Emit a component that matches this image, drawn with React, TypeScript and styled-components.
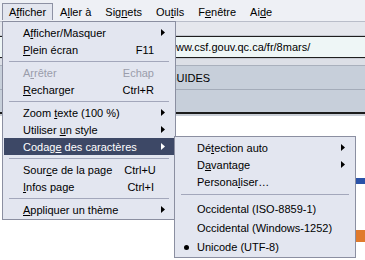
import React from 'react';
import styled, { createGlobalStyle } from 'styled-components';

const GlobalStyle = createGlobalStyle`
  html, body {
    margin: 0;
    padding: 0;
    background: #ffffff;
  }
  body {
    font-family: 'Liberation Sans', Arial, sans-serif;
    font-size: 11px;
    color: #000;
  }
`;

const Window = styled.div`
  position: relative;
  width: 365px;
  height: 260px;
  overflow: hidden;
  display: flex;
  flex-direction: column;
  background: #ffffff;
`;

const MenuBar = styled.div`
  display: flex;
  align-items: flex-start;
  height: 21px;
  padding: 0 0 0 2px;
  background: #eef0f5;
  border-bottom: 1px solid #b9bdc9;
  flex-shrink: 0;
`;

const BarItem = styled.div<{ $open?: boolean }>`
  height: 17px;
  margin-top: 3px;
  padding: 0 6px;
  line-height: 16px;
  box-sizing: border-box;
  border: 1px solid ${(p) => (p.$open ? '#8d91a3' : 'transparent')};
  border-bottom: none;
  background: ${(p) => (p.$open ? '#e3e6ef' : 'transparent')};
  white-space: nowrap;
`;

const Toolbar = styled.div`
  height: 13px;
  background: #e5e7ed;
  border-bottom: 1px solid #c3c7cf;
  flex-shrink: 0;
`;

const UrlBar = styled.div`
  height: 20px;
  line-height: 20px;
  padding-left: 168px;
  background: #eef6f6;
  border-top: 1px solid #1e1e1e;
  border-bottom: 1px solid #1e1e1e;
  white-space: nowrap;
  flex-shrink: 0;
`;

const Groove = styled.div`
  height: 6px;
  background: #dcdfe6;
  border-top: 1px solid #c7cbd3;
  border-bottom: 1px solid #a9b0bc;
  flex-shrink: 0;
`;

const TabStrip = styled.div`
  height: 23px;
  line-height: 24px;
  padding-left: 168px;
  background: #c7cfda;
  border-bottom: 1px solid #a4acb9;
  white-space: nowrap;
  flex-shrink: 0;
`;

const ToolBand = styled.div`
  height: 22px;
  background: #c7cfda;
  border-bottom: 2px solid #1c1c1c;
  flex-shrink: 0;
`;

const Content = styled.div`
  flex: 1;
  display: flex;
  justify-content: flex-end;
  border-top: 2px solid #c9ced6;
  background: #ffffff;
`;

const Banner = styled.div`
  width: 10px;
  display: flex;
  flex-direction: column;
  padding-top: 62px;
  gap: 46px;
`;

const Swatch = styled.div<{ $color: string; $h: number }>`
  height: ${(p) => p.$h}px;
  background: ${(p) => p.$color};
`;

const Menu = styled.div<{ $left: number; $top: number; $width: number }>`
  position: absolute;
  left: ${(p) => p.$left}px;
  top: ${(p) => p.$top}px;
  width: ${(p) => p.$width}px;
  box-sizing: border-box;
  padding: 2px 1px 1px;
  background: #e3e6f0;
  border: 1px solid #8b8fa1;
  display: flex;
  flex-direction: column;
`;

const Item = styled.div<{ $active?: boolean; $disabled?: boolean; $h?: number; $indent: number; $right: number }>`
  display: flex;
  align-items: center;
  height: ${(p) => p.$h ?? 17}px;
  padding: 0 ${(p) => p.$right}px 0 ${(p) => p.$indent}px;
  position: relative;
  white-space: nowrap;
  background: ${(p) => (p.$active ? '#3d4866' : 'transparent')};
  color: ${(p) => (p.$active ? '#ffffff' : p.$disabled ? '#9a9dab' : '#000000')};
`;

const Label = styled.span`
  flex: 1;
`;

const Shortcut = styled.span`
  margin: 0 11px 0 12px;
`;

const Arrow = styled.svg`
  width: 4px;
  height: 7px;
  fill: currentColor;
`;

const Bullet = styled.span`
  position: absolute;
  left: 8px;
  top: 8px;
  width: 5px;
  height: 5px;
  border-radius: 50%;
  background: #000;
`;

const Separator = styled.div<{ $h: number }>`
  height: ${(p) => p.$h}px;
  display: flex;
  align-items: center;
  padding: 0 5px;
  &::after {
    content: '';
    flex: 1;
    height: 1px;
    background: #a3a7bb;
  }
`;

const U = styled.u`
  text-decoration: underline;
  text-underline-offset: 1px;
`;

const ArrowIcon = () => (
  <Arrow viewBox="0 0 4 7">
    <path d="M0 0 L4 3.5 L0 7 Z" />
  </Arrow>
);

type Entry =
  | { sep: true }
  | { sep?: false; label: React.ReactNode; shortcut?: string; sub?: boolean; active?: boolean; disabled?: boolean; checked?: boolean; h?: number };

const mainEntries: Entry[] = [
  { label: <>A<U>f</U>ficher/Masquer</>, sub: true },
  { label: <><U>P</U>lein écran</>, shortcut: 'F11' },
  { sep: true },
  { label: <>A<U>r</U>rêter</>, shortcut: 'Echap', disabled: true },
  { label: <><U>R</U>echarger</>, shortcut: 'Ctrl+R' },
  { sep: true },
  { label: <>Zoom <U>t</U>exte (100 %)</>, sub: true },
  { label: <>Utiliser <U>u</U>n style</>, sub: true },
  { label: <>Codag<U>e</U> des caractères</>, sub: true, active: true },
  { sep: true },
  { label: <>Sour<U>c</U>e de la page</>, shortcut: 'Ctrl+U' },
  { label: <><U>I</U>nfos page</>, shortcut: 'Ctrl+I' },
  { sep: true },
  { label: <><U>A</U>ppliquer un thème</>, sub: true },
];

const charsetEntries: Entry[] = [
  { label: <>Dé<U>t</U>ection auto</>, sub: true },
  { label: <>D<U>a</U>vantage</>, sub: true },
  { label: <>Persona<U>l</U>iser…</> },
  { sep: true },
  { label: 'Occidental (ISO-8859-1)', h: 19 },
  { label: 'Occidental (Windows-1252)', h: 19 },
  { label: 'Unicode (UTF-8)', h: 19, checked: true },
];

const renderEntries = (entries: Entry[], indent: number, right: number, sepH: number) =>
  entries.map((e, i) =>
    e.sep ? (
      <Separator key={`sep-${i}`} $h={sepH} />
    ) : (
      <Item
        key={`item-${i}`}
        $active={e.active}
        $disabled={e.disabled}
        $h={e.h}
        $indent={indent}
        $right={right}
      >
        {e.checked && <Bullet />}
        <Label>{e.label}</Label>
        {e.shortcut && <Shortcut>{e.shortcut}</Shortcut>}
        {e.sub && <ArrowIcon />}
      </Item>
    ),
  );

const App: React.FC = () => (
  <>
    <GlobalStyle />
    <Window>
      <MenuBar>
        <BarItem $open>A<U>f</U>ficher</BarItem>
        <BarItem>A<U>l</U>ler à</BarItem>
        <BarItem>Sig<U>n</U>ets</BarItem>
        <BarItem>Ou<U>t</U>ils</BarItem>
        <BarItem>F<U>e</U>nêtre</BarItem>
        <BarItem>Ai<U>d</U>e</BarItem>
      </MenuBar>
      <Toolbar />
      <UrlBar>www.csf.gouv.qc.ca/fr/8mars/</UrlBar>
      <Groove />
      <TabStrip>GUIDES</TabStrip>
      <ToolBand />
      <Content>
        <Banner>
          <Swatch $color="#2a52a8" $h={6} />
          <Swatch $color="#e07a2c" $h={12} />
        </Banner>
      </Content>

      <Menu $left={2} $top={21} $width={174}>
        {renderEntries(mainEntries, 19, 9, 6)}
      </Menu>
      <Menu $left={174} $top={136} $width={182}>
        {renderEntries(charsetEntries, 21, 9, 9)}
      </Menu>
    </Window>
  </>
);

export default App;
